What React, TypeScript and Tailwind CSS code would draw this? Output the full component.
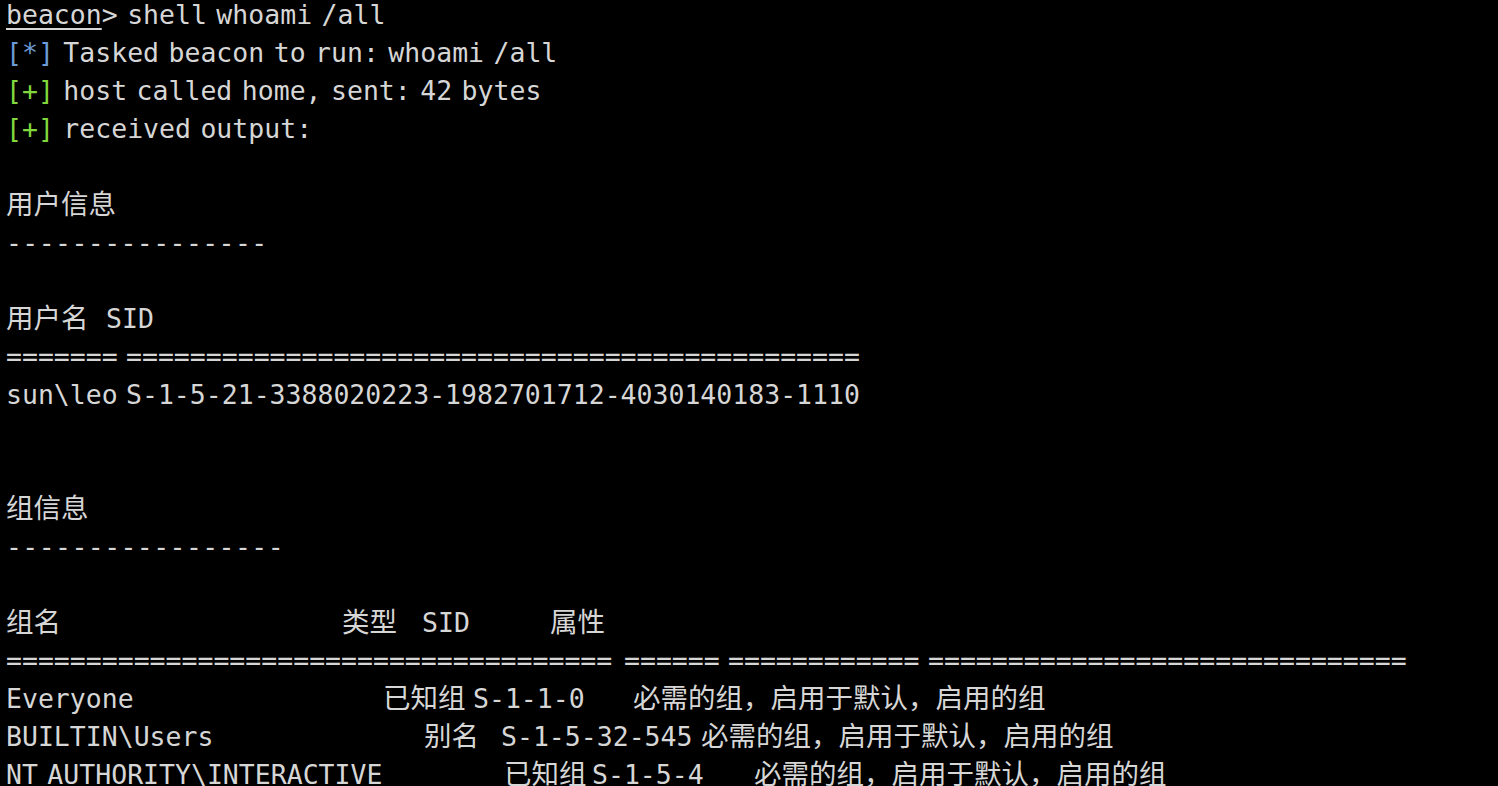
const ATTR = "必需的组，启用于默认，启用的组";

function C({ children }: { children: React.ReactNode }) {
  // CJK glyphs render a bit wider than the mono cell
  return <span className="text-[27.5px]">{children}</span>;
}

function Row({ children }: { children?: React.ReactNode }) {
  return (
    <div className="flex h-[38px] items-baseline whitespace-pre leading-[29px]">
      {children}
    </div>
  );
}

export default function App() {
  return (
    <div className="h-[786px] w-full overflow-hidden bg-black">
      <div className="pl-[6px] font-['DejaVu_Sans_Mono','Noto_Sans_CJK_SC',monospace] text-[26.5px] text-[#d6d6d6] [word-spacing:-6.5px]">
        <Row>
          <span className="underline decoration-2 underline-offset-[4px]">beacon</span>
          <span>&gt; shell whoami /all</span>
        </Row>
        <Row>
          <span className="text-[#6b9bd6]">[*]</span>
          <span> Tasked beacon to run: whoami /all</span>
        </Row>
        <Row>
          <span className="text-[#80d83c]">[+]</span>
          <span> host called home, sent: 42 bytes</span>
        </Row>
        <Row>
          <span className="text-[#80d83c]">[+]</span>
          <span> received output:</span>
        </Row>
        <Row />
        <Row>
          <C>用户信息</C>
        </Row>
        <Row>
          <span className="tracking-[0.4px]">----------------</span>
        </Row>
        <Row />
        <Row>
          <span className="w-[100px] shrink-0">
            <C>用户名</C>
          </span>
          <span>SID</span>
        </Row>
        <Row>
          <span className="w-[120px] shrink-0">=======</span>
          <span>==============================================</span>
        </Row>
        <Row>
          <span className="w-[120px] shrink-0">sun\leo</span>
          <span>S-1-5-21-3388020223-1982701712-4030140183-1110</span>
        </Row>
        <Row />
        <Row />
        <Row>
          <C>组信息</C>
        </Row>
        <Row>
          <span className="tracking-[0.4px]">-----------------</span>
        </Row>
        <Row />
        <Row>
          <span className="w-[336px] shrink-0">
            <C>组名</C>
          </span>
          <span className="w-[80px] shrink-0">
            <C>类型</C>
          </span>
          <span className="w-[128px] shrink-0">SID</span>
          <span>
            <C>属性</C>
          </span>
        </Row>
        <Row>
          <span className="w-[618px] shrink-0">======================================</span>
          <span className="w-[104px] shrink-0">======</span>
          <span className="w-[200px] shrink-0">============</span>
          <span>==============================</span>
        </Row>
        <Row>
          <span className="w-[377px] shrink-0">Everyone</span>
          <span className="w-[90px] shrink-0">
            <C>已知组</C>
          </span>
          <span className="w-[160px] shrink-0">S-1-1-0</span>
          <span>
            <C>{ATTR}</C>
          </span>
        </Row>
        <Row>
          <span className="w-[418px] shrink-0">BUILTIN\Users</span>
          <span className="w-[77px] shrink-0">
            <C>别名</C>
          </span>
          <span className="w-[200px] shrink-0">S-1-5-32-545</span>
          <span>
            <C>{ATTR}</C>
          </span>
        </Row>
        <Row>
          <span className="w-[498px] shrink-0">NT AUTHORITY\INTERACTIVE</span>
          <span className="w-[88px] shrink-0">
            <C>已知组</C>
          </span>
          <span className="w-[162px] shrink-0">S-1-5-4</span>
          <span>
            <C>{ATTR}</C>
          </span>
        </Row>
      </div>
    </div>
  );
}
